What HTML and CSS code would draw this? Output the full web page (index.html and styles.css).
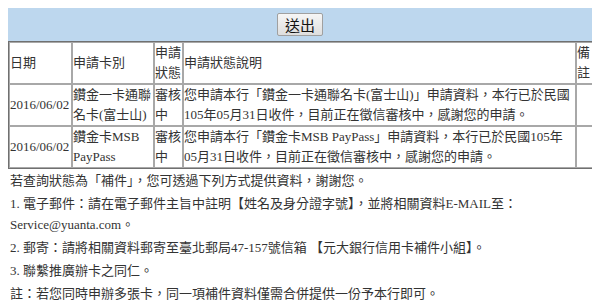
FILE: index.html
```html
<!DOCTYPE html>
<html lang="zh-Hant">
<head>
<meta charset="utf-8">
<link rel="stylesheet" href="styles.css">
</head>
<body>
<div class="bar"><button class="submit" type="button">送出</button></div>
<table class="grid">
  <colgroup>
    <col class="c-date"><col class="c-card"><col class="c-stat"><col class="c-desc"><col class="c-note">
  </colgroup>
  <thead>
    <tr><th>日期</th><th>申請卡別</th><th>申請狀態</th><th>申請狀態說明</th><th>備註</th></tr>
  </thead>
  <tbody>
    <tr>
      <td>2016/06/02</td>
      <td>鑽金一卡通聯名卡(富士山)</td>
      <td>審核中</td>
      <td>您申請本行「鑽金一卡通聯名卡(富士山)」申請資料，本行已於民國105年05月31日收件，目前正在徵信審核中，感謝您的申請。</td>
      <td></td>
    </tr>
    <tr>
      <td>2016/06/02</td>
      <td>鑽金卡MSB PayPass</td>
      <td>審核中</td>
      <td>您申請本行「鑽金卡MSB PayPass」申請資料，本行已於民國105年05月31日收件，目前正在徵信審核中，感謝您的申請。</td>
      <td></td>
    </tr>
  </tbody>
</table>
<div class="notes">
  <p>若查詢狀態為「補件」，您可透過下列方式提供資料，謝謝您。</p>
  <p>1. 電子郵件：請在電子郵件主旨中註明【姓名及身分證字號】，並將相關資料E-MAIL至：Service@yuanta.com。</p>
  <p>2. 郵寄：請將相關資料郵寄至臺北郵局47-157號信箱 【元大銀行信用卡補件小組】。</p>
  <p>3. 聯繫推廣辦卡之同仁。</p>
  <p>註：若您同時申辦多張卡，同一項補件資料僅需合併提供一份予本行即可。</p>
</div>
</body>
</html>
```
FILE: styles.css
```css
html, body {
  background: #fff;
}
body {
  margin: 8px;
  font-family: "Liberation Serif", "Noto Sans CJK TC", serif;
  font-size: 13px;
  color: #333;
}
.bar {
  width: 584px;
  height: 33px;
  background: #bdd7ee;
  display: flex;
  align-items: center;
  justify-content: center;
}
.submit {
  width: 46px;
  height: 23px;
  padding: 0;
  border: 1px solid #a0a0a0;
  border-radius: 2px;
  background: linear-gradient(#f6f6f6, #dedede);
  font-family: "Noto Sans CJK TC", sans-serif;
  font-size: 15px;
  line-height: 21px;
  color: #111;
}
.grid {
  width: 584px;
  table-layout: fixed;
  border-collapse: separate;
  border-spacing: 0;
  border: 1px solid #707070;
}
.grid th, .grid td {
  border: 1px solid #a8a8a8;
  padding: 0;
  font-weight: normal;
  text-align: left;
  vertical-align: middle;
  line-height: 20px;
  font-size: 13px;
  overflow: hidden;
}
.c-date { width: 63px; }
.c-card { width: 82px; }
.c-stat { width: 29px; }
.c-desc { width: 393px; }
.c-note { width: 17px; }
.notes {
  padding: 1px 2px 0;
}
.notes p {
  margin: 0 0 2px;
  line-height: 21px;
}
```
